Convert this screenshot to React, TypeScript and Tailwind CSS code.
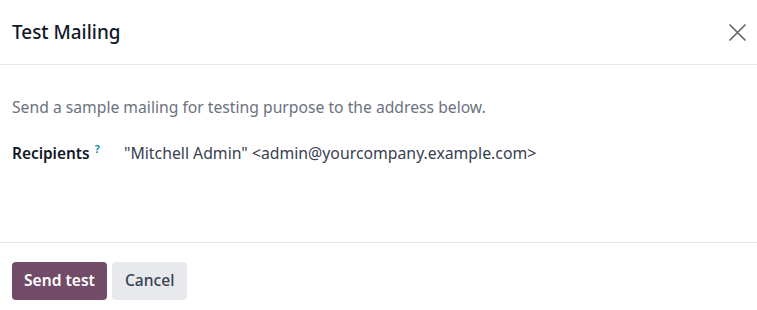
export default function App() {
  return (
    <div className="w-[757px] h-[310px] bg-white text-[#374151] font-['Noto_Sans',sans-serif] flex flex-col">
      <header className="h-[65px] flex items-center justify-between pl-3 pr-[11px] border-b border-[#e5e7eb]">
        <h4 className="text-[18.9px] font-medium text-[#111827]">Test Mailing</h4>
        <button className="text-[#666]" aria-label="Close">
          <svg width="17" height="17" viewBox="0 0 17 17" fill="none" stroke="currentColor" strokeWidth="1.7" strokeLinecap="round">
            <path d="M1 1 16 16M16 1 1 16" />
          </svg>
        </button>
      </header>
      <main className="flex-1 px-3 pt-[31px] border-b border-[#e5e7eb]">
        <p className="text-[15.7px] text-[#6b7280]">Send a sample mailing for testing purpose to the address below.</p>
        <div className="flex items-center mt-[22px]">
          <label className="w-[112px] text-[15.4px] font-semibold text-[#111827]">
            Recipients<sup className="ml-[5px] text-[11px] text-[#0180a5] font-semibold">?</sup>
          </label>
          <span className="text-[15.8px] text-[#374151]">"Mitchell Admin" &lt;admin@yourcompany.example.com&gt;</span>
        </div>
      </main>
      <footer className="h-[67px] flex items-start gap-[5px] px-3 pt-[19px]">
        <button className="h-[38px] px-3 rounded bg-[#714b67] text-white text-[15.6px] font-semibold">Send test</button>
        <button className="h-[38px] px-[13px] rounded bg-[#e7e9ed] text-[#374151] text-[15.6px] font-medium">Cancel</button>
      </footer>
    </div>
  )
}
